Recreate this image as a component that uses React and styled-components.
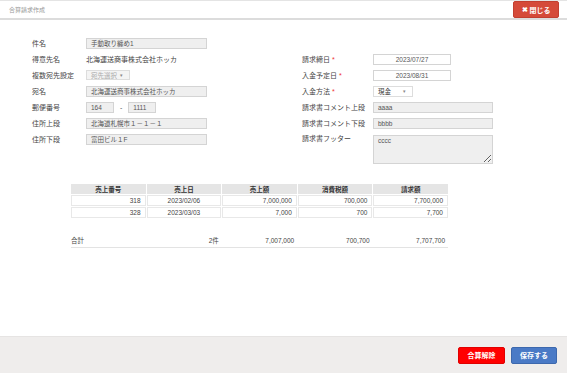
import React from "react";
import styled, { createGlobalStyle } from "styled-components";

const GlobalStyle = createGlobalStyle`
  body {
    margin: 0;
    font-family: "Liberation Sans", "Noto Sans CJK JP", sans-serif;
    color: #333;
    background: #fff;
  }
`;

const Page = styled.div`
  width: 567px;
  height: 373px;
  display: flex;
  flex-direction: column;
  overflow: hidden;
`;

const Header = styled.div`
  height: 17px;
  flex: none;
  display: flex;
  align-items: center;
  justify-content: space-between;
  padding: 0 8px 0 9px;
  border-top: 1px solid #e4e4e4;
  border-bottom: 2px solid #dcdcdc;
`;

const Title = styled.span`
  font-size: 6px;
  color: #999;
`;

const Button = styled.button`
  height: 17px;
  width: ${p => p.$w || 46}px;
  border: 1px solid ${p => p.$border};
  border-radius: 2px;
  background: ${p => p.$bg};
  color: #fff;
  font-family: inherit;
  font-size: 7px;
  font-weight: bold;
  padding: 0;
  display: flex;
  align-items: center;
  justify-content: center;
  gap: 2px;
`;

const Main = styled.div`
  flex: 1;
  padding-top: 15px;
`;

const Form = styled.div`
  display: flex;
  padding-left: 32px;
`;

const Column = styled.div`
  width: ${p => p.$w}px;
  padding-top: ${p => p.$top || 0}px;
  display: flex;
  flex-direction: column;
`;

const Row = styled.div`
  height: ${p => p.$h || 16}px;
  display: flex;
  align-items: ${p => (p.$top ? "flex-start" : "center")};
`;

const Label = styled.div`
  width: ${p => p.$w}px;
  flex: none;
  font-size: 7px;
  color: #444;
  line-height: ${p => (p.$top ? "16px" : "normal")};
`;

const Req = styled.span`
  color: #e33;
  margin-left: 2px;
`;

const Input = styled.div`
  box-sizing: border-box;
  width: ${p => p.$w}px;
  height: 11px;
  border: 1px solid #d4d4d4;
  background: ${p => (p.$white ? "#fff" : "#efefef")};
  font-size: 6.5px;
  color: #555;
  display: flex;
  align-items: center;
  justify-content: ${p => (p.$center ? "center" : "flex-start")};
  padding: 0 4px;
  white-space: nowrap;
  overflow: hidden;
`;

const Plain = styled.div`
  font-size: 7px;
  color: #444;
`;

const Select = styled.div`
  box-sizing: border-box;
  width: ${p => p.$w}px;
  height: ${p => p.$h || 11}px;
  border: 1px solid #ddd;
  background: ${p => (p.$disabled ? "#f4f4f4" : "#fff")};
  color: ${p => (p.$disabled ? "#aaa" : "#333")};
  font-size: 6.5px;
  display: flex;
  align-items: center;
  justify-content: space-between;
  padding: 0 6px 0 4px;

  &::after {
    content: "▾";
    font-size: 5px;
    color: #888;
  }
`;

const Dash = styled.span`
  font-size: 7px;
  color: #555;
  margin: 0 6px;
`;

const TextArea = styled.textarea`
  box-sizing: border-box;
  width: 120px;
  height: 29px;
  margin: 4px 0 0;
  border: 1px solid #d4d4d4;
  border-radius: 0;
  background: #efefef;
  font-family: inherit;
  font-size: 6.5px;
  line-height: 8px;
  color: #555;
  padding: 1px 4px;
  resize: vertical;
  outline: none;
`;

const TableWrap = styled.div`
  padding-left: 70px;
  margin-top: 18px;
`;

const Table = styled.table`
  width: 379px;
  table-layout: fixed;
  border-collapse: separate;
  border-spacing: 1px;
  font-size: 6.5px;
`;

const Th = styled.th`
  height: 10px;
  padding: 0;
  background: #e5e5e5;
  font-weight: bold;
  color: #333;
  text-align: center;
`;

const Td = styled.td`
  height: 9px;
  padding: 0 4px;
  border: 1px solid #e8e8e8;
  text-align: ${p => p.$align || "right"};
  color: #444;
`;

const Total = styled.div`
  margin: 14px 0 0 71px;
  width: 377px;
  height: 14px;
  display: grid;
  grid-template-columns: repeat(5, 1fr);
  align-items: center;
  border-bottom: 1px solid #e3e3e3;
  font-size: 6.5px;
  color: #444;
`;

const TotalCell = styled.div`
  text-align: ${p => p.$align || "right"};
  padding-right: ${p => (p.$align === "left" ? 0 : 3)}px;
`;

const Footer = styled.div`
  height: 36px;
  flex: none;
  background: #efedec;
  display: flex;
  align-items: center;
  justify-content: flex-end;
  gap: 6px;
  padding: 0 10px 0 0;
  border-top: 1px solid #e6e4e3;
`;

const rows = [
  { no: 318, date: "2023/02/06", amount: "7,000,000", tax: "700,000", total: "7,700,000" },
  { no: 328, date: "2023/03/03", amount: "7,000", tax: "700", total: "7,700" },
];

export default function App() {
  return (
    <Page>
      <GlobalStyle />
      <Header>
        <Title>合算請求作成</Title>
        <Button $bg="#d54a39" $border="#c23f30">
          <span>✖</span>閉じる
        </Button>
      </Header>
      <Main>
        <Form>
          <Column $w={270}>
            <Row>
              <Label $w={54}>件名</Label>
              <Input $w={121}>手動取り纏め1</Input>
            </Row>
            <Row>
              <Label $w={54}>得意先名</Label>
              <Plain>北海運送商事株式会社ホッカ</Plain>
            </Row>
            <Row>
              <Label $w={54}>複数宛先設定</Label>
              <Select $w={44} $h={10} $disabled>宛先選択</Select>
            </Row>
            <Row>
              <Label $w={54}>宛名</Label>
              <Input $w={121}>北海運送商事株式会社ホッカ</Input>
            </Row>
            <Row>
              <Label $w={54}>郵便番号</Label>
              <Input $w={28}>164</Input>
              <Dash>-</Dash>
              <Input $w={28}>1111</Input>
            </Row>
            <Row>
              <Label $w={54}>住所上段</Label>
              <Input $w={121}>北海道札幌市１－１－１</Input>
            </Row>
            <Row>
              <Label $w={54}>住所下段</Label>
              <Input $w={121}>富田ビル１F</Input>
            </Row>
          </Column>
          <Column $w={200} $top={16}>
            <Row>
              <Label $w={71}>請求締日<Req>*</Req></Label>
              <Input $w={78} $white $center>2023/07/27</Input>
            </Row>
            <Row>
              <Label $w={71}>入金予定日<Req>*</Req></Label>
              <Input $w={78} $white $center>2023/08/31</Input>
            </Row>
            <Row>
              <Label $w={71}>入金方法<Req>*</Req></Label>
              <Select $w={40}>現金</Select>
            </Row>
            <Row>
              <Label $w={71}>請求書コメント上段</Label>
              <Input $w={120}>aaaa</Input>
            </Row>
            <Row>
              <Label $w={71}>請求書コメント下段</Label>
              <Input $w={120}>bbbb</Input>
            </Row>
            <Row $h={34} $top>
              <Label $w={71} $top>請求書フッター</Label>
              <TextArea readOnly defaultValue="cccc" />
            </Row>
          </Column>
        </Form>
        <TableWrap>
          <Table>
            <thead>
              <tr>
                <Th>売上番号</Th>
                <Th>売上日</Th>
                <Th>売上額</Th>
                <Th>消費税額</Th>
                <Th>請求額</Th>
              </tr>
            </thead>
            <tbody>
              {rows.map(r => (
                <tr key={r.no}>
                  <Td>{r.no}</Td>
                  <Td $align="center">{r.date}</Td>
                  <Td>{r.amount}</Td>
                  <Td>{r.tax}</Td>
                  <Td>{r.total}</Td>
                </tr>
              ))}
            </tbody>
          </Table>
        </TableWrap>
        <Total>
          <TotalCell $align="left">合計</TotalCell>
          <TotalCell>2件</TotalCell>
          <TotalCell>7,007,000</TotalCell>
          <TotalCell>700,700</TotalCell>
          <TotalCell>7,707,700</TotalCell>
        </Total>
      </Main>
      <Footer>
        <Button $bg="#ff0000" $border="#e00000" $w={47}>合算解除</Button>
        <Button $bg="#4a7ac6" $border="#3d68ad" $w={46}>保存する</Button>
      </Footer>
    </Page>
  );
}
